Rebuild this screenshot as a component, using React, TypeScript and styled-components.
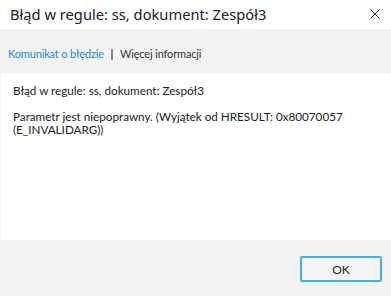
import React from "react";
import styled, { createGlobalStyle } from "styled-components";

const Global = createGlobalStyle`
  html, body { margin: 0; padding: 0; background: #f3f3f3; }
  body { font-family: "Segoe UI", Lato, "Noto Sans", sans-serif; }
`;

const Window = styled.div`
  width: 391px;
  height: 296px;
  display: flex;
  flex-direction: column;
  background: #f3f3f3;
  overflow: hidden;
`;

const TitleBar = styled.div`
  height: 29px;
  flex: none;
  background: #ffffff;
  display: flex;
  align-items: center;
  justify-content: space-between;
  padding: 0 10px 0 10px;
  box-sizing: border-box;
`;

const Title = styled.div`
  font-family: "Segoe UI", "Noto Sans", sans-serif;
  font-size: 14.7px;
  color: #222222;
  line-height: 20px;
  margin-top: -1px;
`;

const CloseIcon = styled.svg`
  width: 10px;
  height: 10px;
  margin-right: 1px;
  margin-top: -1px;
`;

const Tabs = styled.div`
  height: 44px;
  flex: none;
  display: flex;
  align-items: flex-end;
  padding: 0 0 12px 8px;
  box-sizing: border-box;
  font-size: 11px;
  letter-spacing: -0.15px;
  line-height: 14px;
`;

const TabLink = styled.span<{ $active?: boolean }>`
  color: ${(p) => (p.$active ? "#1f8ad6" : "#333333")};
`;

const Separator = styled.span`
  width: 2px;
  height: 11px;
  background: #8a8a8a;
  margin: 0 7px 1px 7px;
`;

const Panel = styled.div`
  height: 167px;
  flex: none;
  margin-left: 1px;
  background: #ffffff;
  padding: 11px 12px 0 12px;
  box-sizing: border-box;
  font-size: 11.7px;
  line-height: 13px;
  color: #222222;
`;

const Para = styled.p`
  margin: 0 0 13px 0;
`;

const Footer = styled.div`
  flex: 1;
  display: flex;
  justify-content: flex-end;
  align-items: flex-start;
  padding: 16px 9px 0 0;
`;

const Button = styled.button`
  width: 82px;
  height: 26px;
  box-sizing: border-box;
  border: 2px solid #4aaee6;
  border-radius: 2px;
  background: #f4f4f4;
  font-family: inherit;
  font-size: 12px;
  color: #222222;
  padding: 0;
`;

export default function App() {
  return (
    <>
      <Global />
      <Window>
        <TitleBar>
          <Title>Błąd w regule: ss, dokument: Zespół3</Title>
          <CloseIcon viewBox="0 0 10 10">
            <path d="M0.5 0.5 L9.5 9.5 M9.5 0.5 L0.5 9.5" stroke="#333" strokeWidth="1" fill="none" />
          </CloseIcon>
        </TitleBar>
        <Tabs>
          <TabLink $active>Komunikat o błędzie</TabLink>
          <Separator />
          <TabLink>Więcej informacji</TabLink>
        </Tabs>
        <Panel>
          <Para>Błąd w regule: ss, dokument: Zespół3</Para>
          <Para>
            Parametr jest niepoprawny. (Wyjątek od HRESULT: 0x80070057
            <br />
            (E_INVALIDARG))
          </Para>
        </Panel>
        <Footer>
          <Button>OK</Button>
        </Footer>
      </Window>
    </>
  );
}
